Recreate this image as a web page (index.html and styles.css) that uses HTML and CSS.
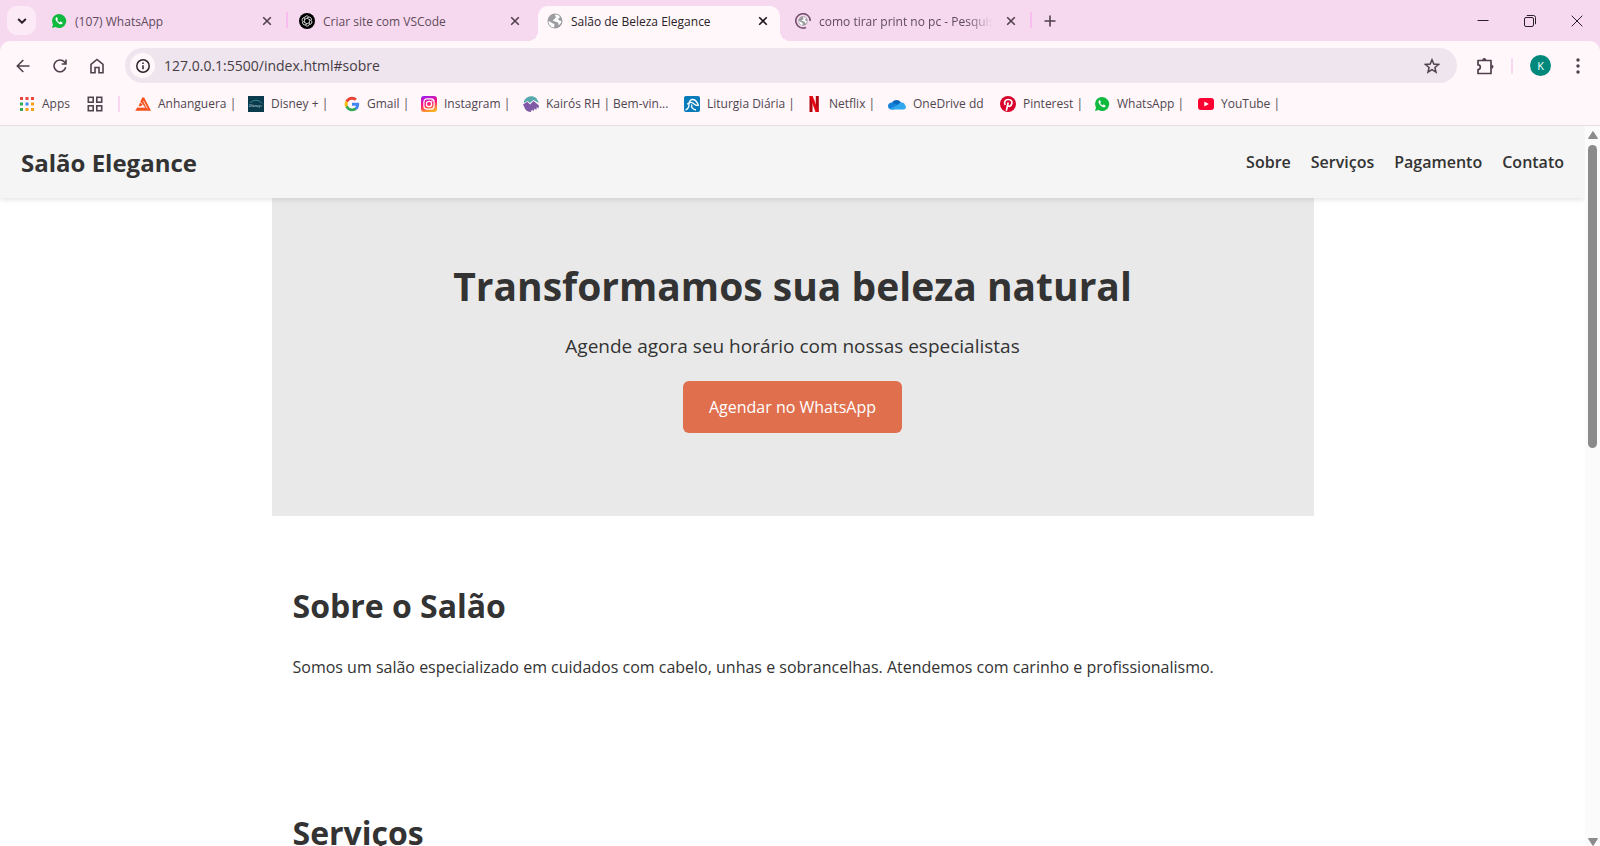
FILE: index.html
```html
<!DOCTYPE html>
<html lang="pt-BR">
<head>
    <meta charset="UTF-8">
    <title>Salão de Beleza Elegance</title>
    <link rel="stylesheet" href="styles.css">
</head>
<body>
<!-- shared icons -->
<svg class="defs" aria-hidden="true">
    <symbol id="i-whats" viewBox="0 0 16 16">
        <path fill="#12b93f" d="M8 1a7 7 0 0 0-6 10.500L1 15l3.600-1A7 7 0 1 0 8 1z"/>
        <path fill="#fff" d="M5.600 4.300c-.9.300-1.300 1.300-1 2.300.6 2 2.500 4 4.600 4.600 1 .3 2-.1 2.300-1 .1-.4 0-.7-.2-.8l-1.500-.8c-.3-.1-.5 0-.7.3l-.4.500c-1.100-.4-2-1.300-2.500-2.400l.5-.5c.2-.2.2-.4.1-.6l-.6-1.400c-.1-.2-.4-.3-.6-.2z"/>
    </symbol>
    <symbol id="i-close" viewBox="0 0 10 10">
        <path d="M1.200 1.200l7.600 7.600M8.800 1.200L1.200 8.800" stroke="currentColor" stroke-width="1.600" fill="none"/>
    </symbol>
    <symbol id="i-globe" viewBox="0 0 16 16">
        <circle cx="8" cy="8" r="7.500" fill="#9b9da1"/>
        <path fill="#fff" d="M8.500 1.500c-1 1.200-.3 2 .8 2.300 0 1-1.800 1-1.800 2.300 0 1-1.500.6-1.700 1.600 0 .8 1.400.3 2.200.7.600.6 1.700.4 2.700.8 1.200.6.300 2 1 2.700.7.300 2.500-1.600 2.700-3.900l-2-.5-1.400-1.300 1.300-1.700 1-.1C12.300 2.800 10.500 1.500 8.500 1.500zM1.500 8c0 3.500 2.300 6.200 5.500 6.600.6-1 0-1.700.4-2.500.3-1-.3-1.400-1.400-1.700C4.500 10.300 4.300 8.700 1.500 8z"/>
    </symbol>
</svg>

<div class="tabs">
    <button class="tab-search" aria-label="Pesquisar guias">
        <svg width="10" height="6" viewBox="0 0 10 6"><path d="M1.200 1L5 4.700 8.800 1" fill="none" stroke="currentColor" stroke-width="2"/></svg>
    </button>
    <div class="tab">
        <svg class="fav"><use href="#i-whats"/></svg>
        <span>(107) WhatsApp</span>
        <button aria-label="Fechar"><svg><use href="#i-close"/></svg></button>
    </div>
    <div class="tab line">
        <svg class="fav" viewBox="0 0 16 16">
            <circle cx="8" cy="8" r="8" fill="#000"/>
            <g fill="none" stroke="#d0d0d0" stroke-width=".6">
                <path id="petal" d="M5.500 9.400V5.200a2.300 2.300 0 0 1 4.300-1.100M5.500 6.600l3.700-2.100a2.300 2.300 0 0 1 3.300 2.800"/>
                <use href="#petal" transform="rotate(60 8 8)"/>
                <use href="#petal" transform="rotate(120 8 8)"/>
                <use href="#petal" transform="rotate(180 8 8)"/>
                <use href="#petal" transform="rotate(240 8 8)"/>
                <use href="#petal" transform="rotate(300 8 8)"/>
            </g>
        </svg>
        <span>Criar site com VSCode</span>
        <button aria-label="Fechar"><svg><use href="#i-close"/></svg></button>
    </div>
    <div class="tab active">
        <svg class="fav"><use href="#i-globe"/></svg>
        <span>Salão de Beleza Elegance</span>
        <button aria-label="Fechar"><svg><use href="#i-close"/></svg></button>
    </div>
    <div class="tab">
        <svg class="fav" viewBox="0 0 16 16">
            <use href="#i-globe" x="3" y="3" width="10" height="10"/>
            <path d="M11 14.400A7.200 7.200 0 1 1 15.200 8" fill="none" stroke="#74506f" stroke-width="1.600"/>
        </svg>
        <span class="fade">como tirar print no pc - Pesquis</span>
        <button aria-label="Fechar"><svg><use href="#i-close"/></svg></button>
    </div>
    <button class="new-tab line" aria-label="Nova guia">
        <svg width="12" height="12" viewBox="0 0 12 12"><path d="M6 .5v11M.5 6h11" stroke="currentColor" stroke-width="1.600"/></svg>
    </button>
    <div class="window">
        <button aria-label="Minimizar"><svg width="12" height="12" viewBox="0 0 12 12"><path d="M.5 5.500h11" stroke="currentColor"/></svg></button>
        <button aria-label="Restaurar"><svg width="12" height="12" viewBox="0 0 12 12"><g fill="none" stroke="currentColor"><rect x=".5" y="2.500" width="9" height="9" rx="1.500"/><path d="M2.800.5H9.500a2 2 0 0 1 2 2v6.700"/></g></svg></button>
        <button aria-label="Fechar janela"><svg width="12" height="12" viewBox="0 0 12 12"><path d="M.7.7l10.600 10.600M11.300.7L.7 11.300" stroke="currentColor"/></svg></button>
    </div>
</div>

<div class="chrome">
    <div class="toolbar">
        <button aria-label="Voltar"><svg width="14" height="14" viewBox="0 0 14 14"><path d="M13.500 7H1.500M7.300 1L1.300 7l6 6" fill="none" stroke="currentColor" stroke-width="1.600"/></svg></button>
        <button aria-label="Recarregar"><svg width="14" height="14" viewBox="0 0 14 14"><path d="M12.700 8.200A5.900 5.900 0 1 1 11.500 3.100L13 5M13 .6V5H8.700" fill="none" stroke="currentColor" stroke-width="1.600"/></svg></button>
        <button aria-label="Página inicial"><svg width="16" height="16" viewBox="0 0 16 16"><path d="M2 6.300L8 1.500l6 4.800v8.500H10V9.500H6v5.300H2z" fill="none" stroke="currentColor" stroke-width="1.600"/></svg></button>
        <div class="address">
            <button class="info" aria-label="Informações do site">
                <svg width="14" height="14" viewBox="0 0 14 14"><circle cx="7" cy="7" r="6.200" fill="none" stroke="currentColor" stroke-width="1.500"/><path d="M7 6.200v4M7 3.500v1.500" stroke="currentColor" stroke-width="1.500"/></svg>
            </button>
            <input type="text" aria-label="Endereço" value="127.0.0.1:5500/index.html#sobre">
            <button class="star" aria-label="Favoritar">
                <svg width="16" height="16" viewBox="0 0 16 16"><path d="M8 1.800l1.800 4.300 4.700.4-3.600 3 1.100 4.600L8 11.700l-4 2.400 1.100-4.600-3.600-3 4.700-.4z" fill="none" stroke="currentColor" stroke-width="1.500"/></svg>
            </button>
        </div>
        <button class="ext" aria-label="Extensões">
            <svg width="18" height="18" viewBox="0 0 18 18"><path d="M2 3.500h13v13H2v-4a2.300 2.300 0 0 0 0-4.600z" fill="none" stroke="currentColor" stroke-width="1.700" stroke-linejoin="round"/><path fill="currentColor" d="M6.300 3a2 2 0 0 1 4 0zM15.500 7.800a2 2 0 0 1 0 4z"/></svg>
        </button>
        <i class="sep"></i>
        <button class="avatar" aria-label="Perfil">K</button>
        <button class="menu" aria-label="Menu"><svg width="4" height="16" viewBox="0 0 4 16"><g fill="currentColor"><circle cx="2" cy="2" r="1.700"/><circle cx="2" cy="8" r="1.700"/><circle cx="2" cy="14" r="1.700"/></g></svg></button>
    </div>

    <nav class="bookmarks">
        <a href="#">
            <svg viewBox="0 0 16 16">
                <path fill="#e8453c" d="M1 1h3v3H1zM6.500 1h3v3h-3zM12 1h3v3h-3z"/>
                <path fill="#34a853" d="M1 6.500h3v3H1z"/><path fill="#4285f4" d="M6.500 6.500h3v3h-3z"/><path fill="#f9a01b" d="M12 6.500h3v3h-3z"/>
                <path fill="#34a853" d="M1 12h3v3H1z"/><path fill="#f9a01b" d="M6.500 12h3v3h-3zM12 12h3v3h-3z"/>
            </svg>Apps</a>
        <a href="#" aria-label="Grupos de guias">
            <svg viewBox="0 0 16 16"><g fill="none" stroke="#50454f" stroke-width="1.600"><rect x="1.300" y="1.300" width="4.900" height="4.900"/><rect x="9.800" y="1.300" width="4.900" height="4.900"/><rect x="1.300" y="9.800" width="4.900" height="4.900"/><rect x="9.800" y="9.800" width="4.900" height="4.900"/></g></svg></a>
        <i class="sep"></i>
        <a href="#">
            <svg viewBox="0 0 16 16"><path fill="#f4511e" d="M7.200 1.500h2L16 14.700H.2l2.200-3.400h7.300L8.300 8.700l-1.100.1-1 1.500H3.500z"/><path d="M5 6.200l2.700 2M2.500 11.200h7.800M8.500 5l3.800 7.500" fill="none" stroke="#fff7fa" stroke-width=".8"/></svg>Anhanguera |</a>
        <a href="#">
            <svg viewBox="0 0 16 16"><rect width="16" height="16" fill="#0a3b4d"/><path d="M2 7c3-3.600 9-3.800 12 .5" fill="none" stroke="#3f97a8" stroke-width=".8"/><text class="disney" x="1" y="11">Disney+</text></svg>Disney + |</a>
        <a href="#">
            <svg viewBox="0 0 48 48"><path fill="#ea4335" d="M24 11c3.500 0 6.300 1.300 8.500 3.300l6.200-6.200C35 4.500 30 2 24 2 15.400 2 8 7 4.400 14l7.200 5.600C13.300 14.500 18 11 24 11z"/><path fill="#4285f4" d="M45.500 24.500c0-1.500-.2-3-.4-4.500H24v9h12c-.6 3-2.200 5.200-4.600 6.800l7 5.500c4.600-4.300 7.100-10 7.100-16.800z"/><path fill="#fbbc05" d="M11.600 28.400A13 13 0 0 1 11 24c0-1.500.3-3 .7-4.400L4.400 14a22 22 0 0 0 0 20z"/><path fill="#34a853" d="M24 46c6 0 11-2 14.500-5.200l-7-5.500c-2 1.400-4.500 2.200-7.500 2.200-5.800 0-10.600-3.900-12.400-9.100L4.400 34C8 41 15.400 46 24 46z"/></svg>Gmail |</a>
        <a href="#">
            <svg viewBox="0 0 16 16">
                <defs><linearGradient id="ig" x1=".2" y1="0" x2=".5" y2="1"><stop offset="0" stop-color="#9a1cf0"/><stop offset=".5" stop-color="#ff1478"/><stop offset="1" stop-color="#ffb020"/></linearGradient></defs>
                <rect width="16" height="16" rx="3" fill="url(#ig)"/><g fill="none" stroke="#fff" stroke-width="1.200"><rect x="2.900" y="2.900" width="10.200" height="10.200" rx="3"/><circle cx="8" cy="8" r="2.600"/></g><circle cx="11" cy="5" r=".8" fill="#fff"/>
            </svg>Instagram |</a>
        <a href="#">
            <svg viewBox="0 0 16 16"><path fill="#58a9ae" d="M.8 5.500C2.500 1.500 6 0 9 .3c3.500.4 6 3 6.600 6.700L10.500 4 7 7 4.500 5 1 7z"/><path fill="#8059a6" d="M0 8.500l4.200-2.700L7 8.500 10.500 5 16 9.500l-.8 3.200-1.400-1.700-.5 3-1.800-1.500-.7 2.500-1.800-1.200-1.300 2.200C3.800 15.500 2.300 14 1.300 11z"/></svg>Kairós RH | Bem-vin...</a>
        <a href="#">
            <svg viewBox="0 0 16 16"><rect width="16" height="16" rx="2" fill="#087bbb"/><path d="M1.500 14c2.500-1 3.500-3 3.500-5.500C5 5 6.800 3.300 9 3.500c3.500.3 4.500 3 5.500 6.500M3.200 8.200C5 6.500 7 6 8.800 7c1.700 1 2 2.500 4.700 2.500M7.800 8.500c-.8 3 1 5 4.200 5.500" fill="none" stroke="#fff" stroke-width="1.300"/></svg>Liturgia Diária |</a>
        <a href="#">
            <svg viewBox="0 0 16 16"><path fill="#b1060f" d="M3.500 0h3v16h-3zM9.800 0h3v16h-3z"/><path fill="#e50914" d="M3.500 0h3.200l6.100 16H9.600z"/></svg>Netflix |</a>
        <a href="#">
            <svg class="wide" viewBox="0 0 18 16"><path fill="#0a65bd" d="M4 7c1-3.500 6.500-4.500 9-.5l.5 3L5 12z"/><path fill="#1681d8" d="M0 10c0-2.500 2.500-4 5-3.300L12 10l-6 3.500H3.500C1.500 13.500 0 12 0 10z"/><path fill="#30a8ee" d="M2 13l8-4.500c2-3 6.300-2.500 6.800.3 1.800 1.200 1.400 4.700-1.300 4.700H4z"/></svg>OneDrive dd</a>
        <a href="#">
            <svg viewBox="0 0 16 16"><circle cx="8" cy="8" r="8" fill="#d8042b"/><path d="M6.300 14.800L8.200 6.500M5.300 9C3.500 6.500 5 3.500 8.300 3.500c3 0 4 2 3.500 4-.5 2.700-3 3.600-4.300 2" fill="none" stroke="#fff" stroke-width="1.700"/></svg>Pinterest |</a>
        <a href="#"><svg><use href="#i-whats"/></svg>WhatsApp |</a>
        <a href="#">
            <svg viewBox="0 0 16 16"><rect y="2" width="16" height="12" rx="3" fill="#f03"/><path fill="#fff" d="M6.300 5.500L10.800 8l-4.500 2.500z"/></svg>YouTube |</a>
    </nav>
</div>

<div class="viewport">
    <div class="page">
        <header>
            <h1>Salão Elegance</h1>
            <nav>
                <a href="#sobre">Sobre</a>
                <a href="#servicos">Serviços</a>
                <a href="#pagamento">Pagamento</a>
                <a href="#contato">Contato</a>
            </nav>
        </header>
        <section class="hero">
            <h2>Transformamos sua beleza natural</h2>
            <p>Agende agora seu horário com nossas especialistas</p>
            <a href="#" class="btn">Agendar no WhatsApp</a>
        </section>
        <section id="sobre">
            <h2>Sobre o Salão</h2>
            <p>Somos um salão especializado em cuidados com cabelo, unhas e sobrancelhas. Atendemos com carinho e profissionalismo.</p>
        </section>
        <section id="servicos">
            <h2>Serviços</h2>
        </section>
    </div>
    <div class="scrollbar">
        <svg width="10" height="8" viewBox="0 0 10 8"><path d="M5 .5L9.500 7.500H.5z" fill="#8b8b8b" stroke="#8b8b8b" stroke-linejoin="round"/></svg>
        <div class="track"><div class="thumb"></div></div>
        <svg width="10" height="8" viewBox="0 0 10 8"><path d="M5 7.500L9.500.5H.5z" fill="#8b8b8b" stroke="#8b8b8b" stroke-linejoin="round"/></svg>
    </div>
</div>
</body>
</html>
```

FILE: styles.css
```css
* {
    box-sizing: border-box;
    margin: 0;
    padding: 0;
}

body {
    display: flex;
    flex-direction: column;
    height: 100vh;
    overflow: hidden;
    font-family: "Open Sans", "Noto Sans", sans-serif;
    color: #333;
    background: #f6d9ef;
}

button {
    display: flex;
    align-items: center;
    justify-content: center;
    flex: none;
    border: none;
    background: none;
    color: #50404c;
    font-family: inherit;
}

a {
    color: inherit;
    text-decoration: none;
}

.defs {
    position: absolute;
    width: 0;
    height: 0;
}

/* tab strip */
.tabs {
    display: flex;
    align-items: flex-end;
    height: 41px;
    font-size: 12px;
}

.tab-search {
    width: 29px;
    height: 29px;
    margin: 0 6px 6px 7px;
    border-radius: 10px;
    background: #fdeaf7;
    color: #2b1f29;
}

.tab {
    position: relative;
    display: flex;
    align-items: center;
    width: 248px;
    height: 35px;
    padding: 0 10px 5px 9px;
    color: #5f4b5b;
}

.fav {
    flex: none;
    width: 16px;
    height: 16px;
    margin-right: 8px;
}

.tab span {
    flex: 1;
    white-space: nowrap;
}

.tab .fade {
    overflow: hidden;
    mask-image: linear-gradient(to right, #000 85%, transparent);
}

.tab button {
    width: 26px;
    height: 20px;
    margin-left: 5px;
}

.tab button svg {
    width: 10px;
    height: 10px;
}

.tab.active {
    width: 242px;
    margin-right: 6px;
    padding-right: 4px;
    border-radius: 10px 10px 0 0;
    background: #fff7fa;
    color: #2b2229;
}

.tab.active button {
    color: #1f181d;
}

.tab.active::before,
.tab.active::after {
    content: "";
    position: absolute;
    bottom: 0;
    width: 10px;
    height: 10px;
}

.tab.active::before {
    left: -10px;
    background: radial-gradient(circle at 0 0, transparent 10px, #fff7fa 10px);
}

.tab.active::after {
    right: -10px;
    background: radial-gradient(circle at 100% 0, transparent 10px, #fff7fa 10px);
}

.line::before {
    content: "";
    position: absolute;
    left: -4px;
    top: 6px;
    width: 2px;
    height: 16px;
    background: #fabdf0;
}

.new-tab {
    position: relative;
    width: 31px;
    height: 35px;
    padding-bottom: 6px;
}

.window {
    display: flex;
    margin-left: auto;
}

.window button {
    width: 47px;
    height: 41px;
    color: #2b1f29;
}

/* toolbar and bookmarks */
.chrome {
    flex: none;
    border-bottom: 1px solid #e9dde5;
    border-radius: 10px 10px 0 0;
    background: #fff7fa;
}

.toolbar {
    display: flex;
    align-items: center;
    height: 49px;
    padding: 0 14px 0 4px;
}

.toolbar > button {
    width: 37px;
    height: 32px;
}

.address {
    display: flex;
    flex: 1;
    align-items: center;
    height: 35px;
    margin: 0 9px 0 10px;
    padding: 0 12px 0 5px;
    border-radius: 18px;
    background: #eee5ee;
}

.address .info {
    width: 25px;
    height: 25px;
    border-radius: 50%;
    background: #fff7fa;
    color: #2b222a;
}

.address input {
    flex: 1;
    margin-left: 9px;
    border: none;
    outline: none;
    background: none;
    color: #463c44;
    font: 14px "Open Sans", "Noto Sans", sans-serif;
}

.address .star {
    width: 26px;
}

.sep {
    width: 2px;
    height: 16px;
    background: #fbd8f2;
}

.toolbar .sep {
    margin: 0 17px 0 8px;
}

.toolbar > .avatar {
    width: 21px;
    height: 21px;
    margin-right: 19px;
    border-radius: 50%;
    background: #00897b;
    color: #fff;
    font-size: 11px;
}

.toolbar > .menu {
    width: 16px;
}

.bookmarks {
    display: grid;
    grid-template-columns: 68px 31px 17px 113px 96px 77px 102px 161px 122px 82px 112px 94px 104px auto;
    align-items: center;
    height: 35px;
    padding: 0 0 8px 19px;
    color: #50464f;
    font-size: 12px;
    white-space: nowrap;
}

.bookmarks a {
    display: flex;
    align-items: center;
    gap: 7px;
}

.bookmarks svg {
    flex: none;
    width: 16px;
    height: 16px;
}

.bookmarks svg.wide {
    width: 18px;
}

.disney {
    fill: #d5e6ea;
    font: italic 4px "Open Sans", sans-serif;
}

/* salon page */
.viewport {
    display: flex;
    flex: 1;
    min-height: 0;
    background: #fff;
}

.page {
    flex: 1;
    overflow: hidden;
    font-size: 16px;
    line-height: 27px;
}

header {
    position: relative;
    display: flex;
    align-items: center;
    justify-content: space-between;
    height: 72px;
    padding: 0 21px;
    background: #f5f5f5;
    box-shadow: 0 2px 5px rgba(0, 0, 0, 0.1);
}

header h1 {
    font-size: 24px;
}

header nav {
    display: flex;
    gap: 20px;
    font-weight: 600;
}

section {
    max-width: 1042px;
    margin: 0 auto;
    padding: 62px 21px;
}

section h2 {
    margin-bottom: 20px;
    font-size: 32px;
    line-height: 56px;
}

.hero {
    height: 318px;
    background: #e9e9e9;
    text-align: center;
}

.hero h2 {
    margin-bottom: 16px;
    font-size: 39px;
    line-height: 52px;
}

.hero p {
    margin-bottom: 16px;
    font-size: 19px;
    line-height: 37px;
}

.btn {
    display: inline-block;
    padding: 12px 26px;
    border-radius: 6px;
    background: #e06f4d;
    color: #fff;
    line-height: 28px;
}

.scrollbar {
    display: flex;
    flex-direction: column;
    align-items: center;
    width: 15px;
    padding-top: 5px;
    background: #fbfbfb;
}

.track {
    flex: 1;
    margin: 6px 0 4px;
}

.thumb {
    width: 9px;
    height: 44%;
    border-radius: 5px;
    background: #8b8b8b;
}
```
